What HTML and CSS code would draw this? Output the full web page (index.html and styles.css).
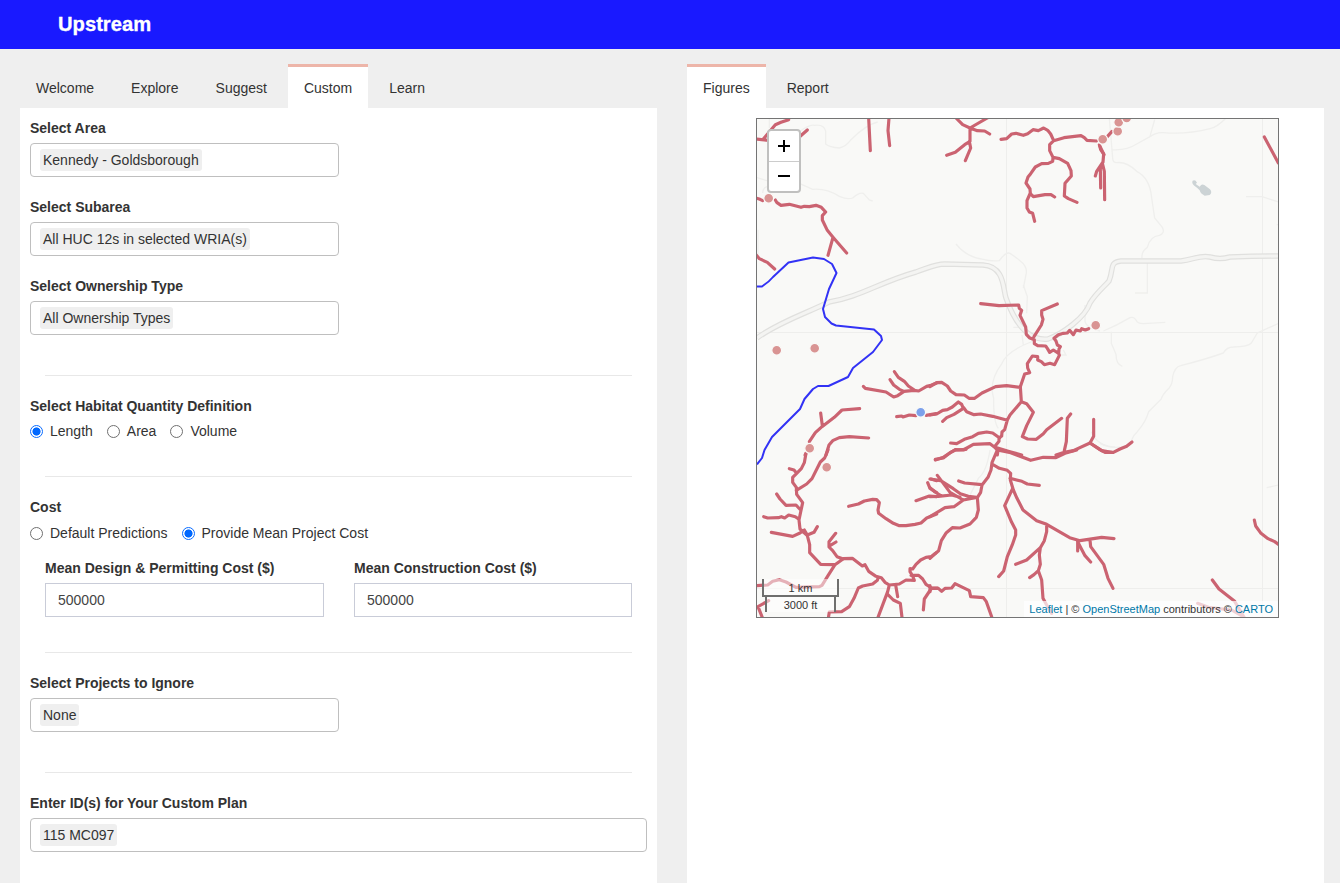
FILE: index.html
```html
<!DOCTYPE html>
<html lang="en">
<head>
<meta charset="utf-8">
<title>Upstream</title>
<link rel="stylesheet" href="styles.css">
</head>
<body>
<header class="header">Upstream</header>
<main class="columns">
  <section class="panel">
    <nav class="tabs">
      <a class="tab">Welcome</a><a class="tab">Explore</a><a class="tab">Suggest</a><a class="tab active">Custom</a><a class="tab">Learn</a>
    </nav>
    <form class="body">
      <div class="group"><label class="label">Select Area</label><div class="select"><span class="item">Kennedy - Goldsborough</span></div></div>
      <div class="group"><label class="label">Select Subarea</label><div class="select"><span class="item">All HUC 12s in selected WRIA(s)</span></div></div>
      <div class="group"><label class="label">Select Ownership Type</label><div class="select"><span class="item">All Ownership Types</span></div></div>
      <hr class="rule after-select">
      <div class="label">Select Habitat Quantity Definition</div>
      <div class="radios">
        <label class="choice"><input type="radio" class="radio" name="habitat" checked>Length</label>
        <label class="choice"><input type="radio" class="radio" name="habitat">Area</label>
        <label class="choice"><input type="radio" class="radio" name="habitat">Volume</label>
      </div>
      <hr class="rule">
      <div class="label">Cost</div>
      <div class="radios cost">
        <label class="choice"><input type="radio" class="radio" name="cost">Default Predictions</label>
        <label class="choice"><input type="radio" class="radio" name="cost" checked>Provide Mean Project Cost</label>
      </div>
      <div class="costs">
        <div><label class="label">Mean Design &amp; Permitting Cost ($)</label><input class="number" type="text" value="500000"></div>
        <div><label class="label">Mean Construction Cost ($)</label><input class="number" type="text" value="500000"></div>
      </div>
      <hr class="rule">
      <div class="group"><label class="label">Select Projects to Ignore</label><div class="select"><span class="item">None</span></div></div>
      <hr class="rule after-select">
      <div class="group"><label class="label">Enter ID(s) for Your Custom Plan</label><div class="select wide"><span class="item">115 MC097</span></div></div>
    </form>
  </section>
  <section class="panel">
    <nav class="tabs"><a class="tab active">Figures</a><a class="tab">Report</a></nav>
    <div class="figure">
      <div class="map">
        <svg class="canvas" viewBox="757 119 521 498" width="521" height="498">
          <!-- map grid -->
          <path class="grid" d="M1006.500 119V617M1262.500 119V617M757 332.500H1278M757 588.500H1278"/>
          <!-- roads and terrain, one group per map tile -->
          <g transform="translate(756 118) scale(.333333)">
            <path class="minor" d="M40 0V30M125 45Q160 18 175 22Q205 18 209 40V78Q220 88 250 90Q270 86 285 65Q330 20 365 12M0 178L40 190M130 196L170 214Q210 210 250 235Q275 246 290 240Q310 222 322 226L340 246L350 249M20 225Q20 205 45 203M6 335V410"/>
          </g>
          <g transform="translate(930 118) scale(.333333)">
            <path class="minor" d="M78 378Q110 418 160 424Q180 430 208 428Q228 400 240 406Q258 418 270 428Q294 446 288 470L280 510"/>
          </g>
          <g transform="translate(1100 118) scale(.333333)">
            <path class="minor" d="M28 0L38 120Q38 134 50 134Q80 130 110 160Q150 180 155 240L164 300L187 328Q196 345 178 352Q150 355 142 388Q124 400 126 420M35 95Q80 98 110 78L150 56Q170 42 190 44Q260 50 330 32Q350 28 376 2M164 5L150 55M142 435V525H105M438 236H486L536 252M530 320H540"/>
            <path class="water" d="M278 188q8-4 13 6l-4 4l12 8q6-10 14-5l17 13q8 10-1 17l-15 2q-12-5-15-16l-8-8l-8-6q-9-7-5-15z"/>
          </g>
          <g transform="translate(930 285) scale(.333333)">
            <path class="minor" d="M280 0L292 35L290 85M250 127H278M280 180L276 150M310 168Q230 198 216 235Q175 290 191 340Q190 410 205 430M465 60V110Q470 130 510 138M400 195L408 210H380M484 440Q500 482 555 486M180 495Q170 560 145 580L115 640"/>
          </g>
          <g transform="translate(1100 285) scale(.333333)">
            <path class="minor" d="M10 138Q50 122 90 98Q102 94 108 105Q112 116 130 116L196 112M34 140V175L48 208Q48 238 67 244M95 465Q100 450 112 440Q138 410 146 380L184 342Q186 330 208 308Q218 295 218 275Q224 246 242 242Q320 222 370 204Q380 186 400 186Q445 185 454 174L472 144L536 115M0 475Q30 492 70 485M500 608L536 600"/>
          </g>
          <g>
            <path class="road" d="M757 338C779 322 807 313 829 302C860 297 880 282 916 272C928 268 935 264 945 264L983 265C1005 266 1003 290 1006 298C1016 326 1030 341 1048 339C1062 334 1085 318 1090 303C1097 292 1104 287 1109 281C1114 269 1109 262 1121 261H1181C1195 259 1200 255 1210 257Q1220 260 1230 257Q1255 256 1278 256"/>
            <path class="road-in" d="M757 338C779 322 807 313 829 302C860 297 880 282 916 272C928 268 935 264 945 264L983 265C1005 266 1003 290 1006 298C1016 326 1030 341 1048 339C1062 334 1085 318 1090 303C1097 292 1104 287 1109 281C1114 269 1109 262 1121 261H1181C1195 259 1200 255 1210 257Q1220 260 1230 257Q1255 256 1278 256"/>
          </g>
          <!-- streams -->
          <g transform="translate(756 118) scale(.333333)">
            <path class="stream" d="M0 63L37 67M22 63L58 20L75 13L98 5M130 57L154 36M338 0L343 98M399 0L396 38L401 83M0 240L12 244L20 248M58 246L62 253L75 262L100 259L135 268L145 265L160 266L180 262L196 268L209 282L199 293V306L214 337L231 358L272 405M231 358L216 412M0 410L10 422L34 433L56 453"/>
          </g>
          <g transform="translate(930 118) scale(.333333)">
            <path class="stream" d="M78 0L98 20L120 30L172 0M120 30L142 38L164 39L179 48M120 30V70L104 80L76 103L50 112M118 70L122 90L106 128M213 64L230 62L245 48L258 46L280 52L293 47L309 35L325 38L341 30L353 37L362 48L371 68L402 59L453 53L463 59L471 67L500 69M371 68L359 80V98L369 118L368 130L355 136L335 137L316 147L302 167L294 177L288 195L300 213L301 227L310 236L345 230L363 230L374 237M301 225L291 248V270L298 282L308 286L314 310M369 118L388 122L413 136L423 158L424 174L405 196L403 234L415 242L441 253M508 80L512 95L521 108L519 132L500 160L496 174M517 135L511 152L512 210M517 135L523 160L524 245"/>
            <path class="stream" d="M530 58L546 40"/>
            <path class="stream" d="M1003 57L1045 135M510 85L522 110"/>
          </g>
          <g transform="translate(930 285) scale(.333333)">
            <path class="stream" d="M152 56L207 62L266 60L268 70L275 76L270 91L287 126L289 148L298 158L313 164V176L323 182L347 183L352 190L359 202L370 195L386 205L388 211L374 239L360 235L343 239L334 230L323 225V215L307 213L292 236L293 249L299 263L284 267L271 305L274 350L240 390L232 405L224 434L216 441L215 453L207 459V469L193 486L204 497L202 510M382 57L335 77V90L339 103L334 120L312 155M386 205L387 192L391 185L382 180L378 168L372 160L385 149L400 145L412 144L419 136L430 149L438 135L451 138L455 131L466 135L476 131M0 305L20 293L35 292L52 303L62 318L78 329L103 330L117 340H134L156 324L197 305L230 302L271 307M274 350L290 356L310 382L290 422L277 455L293 462L319 463L340 446L350 434L395 400M422 387L412 400L409 470L403 497M491 403V454L480 474L430 497L403 502L378 510M480 474L515 497L545 502M0 390L20 387L38 376L52 374L67 366L85 351L95 358L100 370L72 388L50 398L38 409M100 367L110 380L132 389L152 387L188 394L232 406M62 474L80 476L103 463L128 455L145 445L170 441L188 444L209 459M16 525L40 517L50 510L76 494L100 495L130 478L180 476L193 486L240 500L275 510"/>
          </g>
          <g transform="translate(1100 285) scale(.333333)"><path class="stream" d="M-30 474L0 494L15 502H40L60 492L80 484L96 471"/></g>
          <g transform="translate(756 285) scale(.333333)">
            <path class="stream" d="M322 304L328 310L390 321L413 336L425 332L444 319L474 316L488 318L512 304L525 301L542 294M415 260L427 277L445 289L457 303L475 315M402 284L413 300L430 313L444 319M422 395L437 393L441 396L460 390L480 392M510 391L540 386M311 371L258 375L235 397L198 425L178 443L160 470M194 384L199 422M338 459L280 455L250 458L230 467L219 480L210 510M150 505L147 510"/>
          </g>
          <g transform="translate(756 450) scale(.333333)">
            <path class="stream" d="M150 10L145 38L136 56L122 70L110 82L110 97L121 112L122 133L140 158L134 186L129 210L132 237L154 257L161 284V308L194 343L237 344L262 326L289 325L319 348L327 344L338 364L360 379L376 383L387 397L400 405L430 402L450 390L475 391L470 378L462 365V356L470 357L480 343L494 330L510 322L525 320L540 309M216 0L206 24L193 36L168 86L152 102L121 121M100 56L114 60L122 70M62 132L72 147L90 166L120 165L134 180M23 200L35 204L67 203L76 200L86 204L98 195L118 200L129 208M46 247L110 259L132 249L145 240L154 255L174 247L184 230M239 250L219 275V291L230 302L243 320L262 327M222 287L240 276M237 344L216 377L198 406L190 410L120 412L90 396L70 389L50 394L35 405L0 407M22 510L6 470L38 452M278 169L307 162L325 153L350 148L362 149L370 158L366 180L368 190L390 206L412 220L430 227H450L477 223L495 219L512 204L542 192M542 140L520 138L480 152M542 128L522 115L515 98M542 92L525 87M216 510L220 486L257 485L280 470L294 445L307 414L320 408L350 402L364 391L367 381M400 405L395 425L366 502M395 433L412 450L433 460L438 502M419 405L425 440M465 376L488 376L500 387L510 403L527 414L505 447L502 480M527 414L545 414"/>
          </g>
          <g transform="translate(930 450) scale(.333333)">
            <path class="stream" d="M202 0L186 38L183 60L174 82L156 105L152 127L142 143L145 180L139 202L120 222L90 234L67 233L49 248L34 272L26 302L14 312L0 325M16 28L40 24L60 8L76 0L108 -2M186 42L208 55L232 61L242 70L241 90L250 120L261 145L279 180L320 212L350 223L419 263L450 272L515 262L552 266M240 85L276 94L292 102L328 106M248 115L224 167L245 217L257 240V255L247 284L232 320L221 363L206 380M350 224V245L343 272L331 293L290 330L257 343M331 293L328 315L331 343L325 362L335 390L339 445L350 465L365 490M325 362L312 374L299 383M443 272V303M443 275L465 317L482 336M480 270L482 290L521 343L534 385L549 415M86 93L104 99L156 104M0 87L32 92L70 116L91 131L115 139L140 142M22 76L40 100L60 127L100 150L140 142M0 140L25 139L65 135L90 142M0 113L15 126L35 138M0 200L45 173L72 170L100 150M202 0L242 8L302 31L340 22L378 23L405 10L440 0M0 415L25 415L35 424L45 415L65 414L75 401L118 422L122 440L160 443L169 455L185 500M0 407V425"/>
          </g>
          <g transform="translate(1100 450) scale(.333333)">
            <path class="stream" d="M463 210L467 228L483 250L504 266L524 275L540 286M337 390L357 417L404 454L434 505M293 460L325 472L395 480L430 500"/>
          </g>
          <!-- selected stream -->
          <path class="selected" d="M757 286.500H762Q769 282 773 277L788.500 262.500L813 257.500L824 259L832 264L836.500 273L829 289L823 309L825 317L831.500 323.500L836 325.500L874 329.500L881 336L882 340L873 352L853 368L848 377L828.500 386H818L813 389L804.500 399L800 409L772 437L764.500 450L762 458L757 464.500"/>
          <!-- project markers -->
          <g class="dots">
            <circle cx="768.700" cy="198.300" r="4.900"/><circle cx="776.700" cy="350.300" r="4.900"/><circle cx="814.700" cy="348.300" r="4.900"/><circle cx="809.700" cy="448.300" r="4.900"/><circle cx="826.700" cy="467.300" r="4.900"/><circle cx="1095.700" cy="325.300" r="4.900"/><circle cx="1102.700" cy="139.300" r="4.900"/><circle cx="1117.700" cy="131.300" r="4.900"/><circle cx="1118.700" cy="122.300" r="4.900"/><circle cx="1126.700" cy="118" r="4.900"/><circle class="chosen" cx="920.700" cy="412.300" r="4.900"/>
          </g>
        </svg>
        <div class="zoom">
          <span class="zoom-key"><svg width="12" height="12"><path d="M6 0V12M0 6H12"/></svg></span>
          <span class="zoom-key"><svg width="12" height="12"><path d="M0 6H12"/></svg></span>
        </div>
        <div class="scale"><div class="km">1 km</div><div class="ft">3000 ft</div></div>
        <div class="credit"><a>Leaflet</a> | © <a>OpenStreetMap</a> contributors © <a>CARTO</a></div>
      </div>
    </div>
  </section>
</main>
</body>
</html>
```
FILE: styles.css
```css
* { box-sizing: border-box; }
body { margin: 0; height: 883px; overflow: hidden; display: flex; flex-direction: column; background: #efefef; color: #333; font: 14px/20px "Liberation Sans", Arial, sans-serif; }
.header { flex: 0 0 49px; height: 49px; padding-left: 58px; background: #1919ff; color: #fff; font-size: 20.2px; font-weight: bold; line-height: 49px; -webkit-text-stroke: .3px #fff; }
.columns { flex: 1; display: flex; gap: 30px; padding: 15px 16px 0 20px; min-height: 0; }
.panel { width: 637px; background: #fff; }
.tabs { display: flex; gap: 5px; height: 44px; background: #efefef; }
.tab { padding: 14px 16px 0; border-top: 0 solid #edb5a9; }
.tab.active { background: #fff; border-top-width: 3px; padding-top: 11px; }
.body { padding: 10px 10px 0; }
.label { display: block; height: 20px; font-weight: bold; }
.group + .group { margin-top: 20px; }
.select { width: 309px; height: 34px; margin-top: 5px; padding: 5px 9px; border: 1px solid #bfbfbf; border-radius: 4px; }
.select.wide { width: 617px; }
.item { display: inline-block; height: 22px; padding: 0 3px; line-height: 22px; background: #efefef; border-radius: 3px; white-space: nowrap; vertical-align: top; }
.rule { height: 1px; margin: 35px 15px 20px; border: 0; background: #e8e8e8; }
.rule.after-select { margin-top: 40px; }
.radios { display: flex; gap: 14px; height: 20px; margin-top: 5px; }
.radios.cost { margin: 6px 0 15px; }
.choice { display: flex; align-items: center; gap: 7px; }
.radio { appearance: none; width: 13px; height: 13px; margin: 0; border: 1px solid #707070; border-radius: 50%; background: #fff; }
.radio:checked { border: 1px solid #0a6cff; background: radial-gradient(circle, #0068ff 3.700px, #fff 4.400px); }
.costs { display: grid; grid-template-columns: 279px 278px; gap: 30px; padding: 0 15px; }
.number { display: block; width: 100%; height: 34px; margin-top: 5px; padding: 0 12px; border: 1px solid #c9ccd8; color: #444; font: inherit; }
.figure { display: flex; justify-content: center; padding: 10px 0 0 24px; }
.map { position: relative; width: 523px; height: 500px; border: 1px solid #747474; background: #f9f9f7; font-size: 11px; }
.canvas { display: block; }
.grid { fill: none; stroke: #eeeeec; }
.minor { fill: none; stroke: #efefed; stroke-width: 4; }
.water { fill: #ccd3d5; }
.road, .road-in { fill: none; stroke: #e0e0de; stroke-width: 5.500; }
.road-in { stroke: #f4f4f2; stroke-width: 3.200; }
.stream { fill: none; stroke: #cb6371; stroke-width: 9.500; stroke-linecap: round; stroke-linejoin: round; }
.selected { fill: none; stroke: #3232f5; stroke-width: 2; stroke-linejoin: round; }
.dots { fill: #d99493; stroke: #fafaf8; stroke-width: 1.200; }
.chosen { fill: #7da1eb; }
.zoom { position: absolute; left: 10px; top: 10px; width: 34px; height: 64px; border: 2px solid #c0c0bf; border-radius: 4px; background: #fff; overflow: hidden; }
.zoom-key { display: grid; place-items: center; height: 30px; }
.zoom-key + .zoom-key { border-top: 1px solid #ccc; padding-bottom: 1px; }
.zoom-key path { stroke: #000; stroke-width: 2; }
.scale { position: absolute; left: 5px; top: 460px; color: #333; text-align: center; }
.km { width: 77px; height: 18px; border: 2px solid #6f6f6e; border-top: 0; background: rgba(255,255,255,.5); line-height: 19px; }
.ft { width: 71px; height: 15px; margin-left: 3px; border: solid #6f6f6e; border-width: 0 2px; background: rgba(255,255,255,.5); line-height: 17px; }
.credit { position: absolute; right: 0; bottom: 0; height: 16px; padding: 0 5px; background: rgba(255,255,255,.7); line-height: 16px; white-space: nowrap; }
.credit a { color: #0078a8; }
```
